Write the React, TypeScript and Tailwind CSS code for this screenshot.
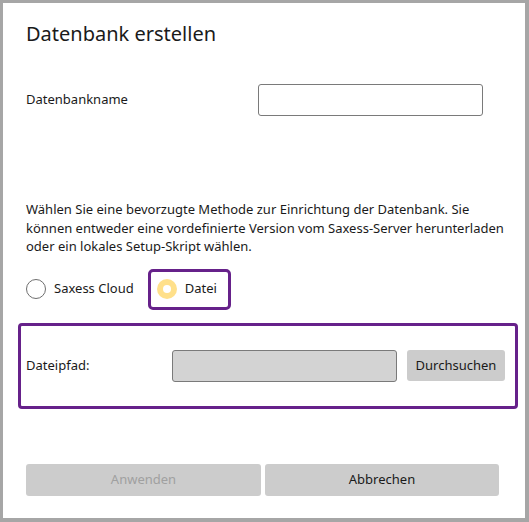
export default function App() {
  return (
    <div className="w-[529px] h-[522px] bg-[#a6a6a6] pt-[3px] pl-[3px] pr-[4px] pb-[4px]" style={{ fontFamily: '"Noto Sans", "Open Sans", sans-serif' }}>
      <div className="h-full bg-white flex flex-col text-[#1a1a1a]">
        <h1 className="ml-[23px] mt-[17px] text-[20px] leading-[28px]">Datenbank erstellen</h1>

        <div className="mt-[36px] ml-[23px] flex items-center">
          <span className="w-[232px] text-[13px]">Datenbankname</span>
          <input className="w-[225px] h-[32px] border border-[#7a7a7a] rounded-[3px] outline-none" />
        </div>

        <p className="mt-[84px] ml-[23px] mr-[20px] text-[13px] leading-[18.5px]">
          Wählen Sie eine bevorzugte Methode zur Einrichtung der Datenbank. Sie können entweder eine vordefinierte Version vom Saxess-Server herunterladen oder ein lokales Setup-Skript wählen.
        </p>

        <div className="mt-[13px] ml-[23px] flex items-center">
          <div className="flex items-center gap-[8px]">
            <span className="w-[20px] h-[20px] rounded-full border border-[#6e6e6e]" />
            <span className="text-[13px]">Saxess Cloud</span>
          </div>
          <div className="ml-[14px] w-[83px] h-[41px] border-[3px] border-[#66218a] rounded-[5px] flex items-center pl-[6px] gap-[8px]">
            <span className="w-[20px] h-[20px] rounded-full bg-[#ffe08a] flex items-center justify-center">
              <span className="w-[8px] h-[8px] rounded-full bg-white" />
            </span>
            <span className="text-[13px]">Datei</span>
          </div>
        </div>

        <div className="mt-[13px] ml-[15px] w-[500px] h-[86px] border-[3px] border-[#66218a] rounded-[4px] flex items-center pl-[5px]">
          <span className="w-[146px] text-[13px]">Dateipfad:</span>
          <div className="w-[225px] h-[32px] bg-[#d3d3d3] border border-[#7a7a7a] rounded-[3px]" />
          <button className="ml-[10px] w-[98px] h-[31px] bg-[#cccccc] rounded-[3px] text-[13px]">Durchsuchen</button>
        </div>

        <div className="mt-[55px] ml-[23px] flex gap-[4px]">
          <button className="w-[235px] h-[32px] bg-[#cccccc] rounded-[3px] text-[13px] text-[#a0a0a0]">Anwenden</button>
          <button className="w-[234px] h-[32px] bg-[#cccccc] rounded-[3px] text-[13px]">Abbrechen</button>
        </div>
      </div>
    </div>
  )
}
